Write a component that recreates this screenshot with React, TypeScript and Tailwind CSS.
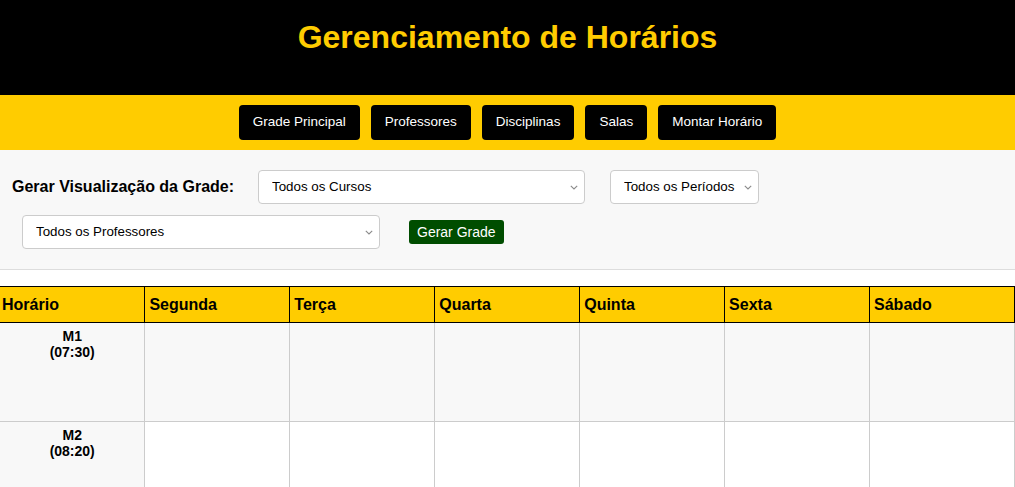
import React from 'react';

const navItems = ['Grade Principal', 'Professores', 'Disciplinas', 'Salas', 'Montar Horário'];
const dias = ['Segunda', 'Terça', 'Quarta', 'Quinta', 'Sexta', 'Sábado'];
const horarios = [
  { id: 'M1', hora: '07:30' },
  { id: 'M2', hora: '08:20' },
];

// select com seta cinza fina, como a nativa do navegador
const Select: React.FC<{ label: string; className: string }> = ({ label, className }) => (
  <div className={`relative ${className}`}>
    <select className="h-[34px] w-full appearance-none rounded-[4px] border border-[#cccccc] bg-white pl-[13px] pr-[16px] text-[13.33px]">
      <option>{label}</option>
    </select>
    <svg
      className="pointer-events-none absolute right-[7px] top-[15px] h-[5px] w-[8px] text-[#8a8a8a]"
      viewBox="0 0 8 5"
      fill="none"
    >
      <path d="M0.8 0.8l3.2 3.2 3.2-3.2" stroke="currentColor" strokeWidth="1.1" />
    </svg>
  </div>
);

export default function App() {
  return (
    <div className="min-h-screen bg-white font-['Liberation_Sans',Arial,sans-serif] text-black">
      {/* Cabeçalho */}
      <header className="h-[95px] bg-black pt-[19px] text-center">
        <h1 className="text-[32px] font-bold leading-[37px] text-[#ffcc00]">Gerenciamento de Horários</h1>
      </header>

      {/* Navegação */}
      <nav className="flex h-[55px] items-center justify-center gap-[11px] bg-[#ffcc00]">
        {navItems.map((item) => (
          <button
            key={item}
            className="h-[35px] rounded-[4px] bg-black px-[14px] text-[13.5px] text-white"
          >
            {item}
          </button>
        ))}
      </nav>

      {/* Filtros */}
      <section className="border-b border-[#dddddd] bg-[#f8f8f8] pb-[20px] pt-[20px]">
        <div className="flex items-center">
          <label className="ml-[12px] text-[16px] font-bold">Gerar Visualização da Grade:</label>
          <Select label="Todos os Cursos" className="ml-[24px] w-[327px]" />
          <Select label="Todos os Períodos" className="ml-[25px] w-[149px]" />
        </div>
        <div className="mt-[11px] flex items-center">
          <Select label="Todos os Professores" className="ml-[22px] w-[358px]" />
          <button className="ml-[29px] h-[24px] rounded-[3px] bg-[#004d00] px-[8px] text-[14px] text-white">
            Gerar Grade
          </button>
        </div>
      </section>

      {/* Grade */}
      <table className="mt-[16px] w-full table-fixed border-collapse">
        <thead>
          <tr className="h-[36px] bg-[#ffcc00]">
            <th className="border-y border-r border-black pl-[2px] text-left text-[16px] font-bold">Horário</th>
            {dias.map((d) => (
              <th key={d} className="border border-black pl-[4px] text-left text-[16px] font-bold">
                {d}
              </th>
            ))}
          </tr>
        </thead>
        <tbody>
          {horarios.map((h, i) => (
            <tr key={h.id} className={i % 2 === 0 ? 'h-[99px] bg-[#f8f8f8]' : 'h-[99px] bg-white'}>
              <td className="border-b border-r border-[#cccccc] bg-[#f8f8f8] pt-[5px] text-center align-top text-[14px] font-bold leading-[16px]">
                {h.id}
                <br />({h.hora})
              </td>
              {dias.map((d) => (
                <td key={d} className="border border-[#cccccc]" />
              ))}
            </tr>
          ))}
        </tbody>
      </table>
    </div>
  );
}
